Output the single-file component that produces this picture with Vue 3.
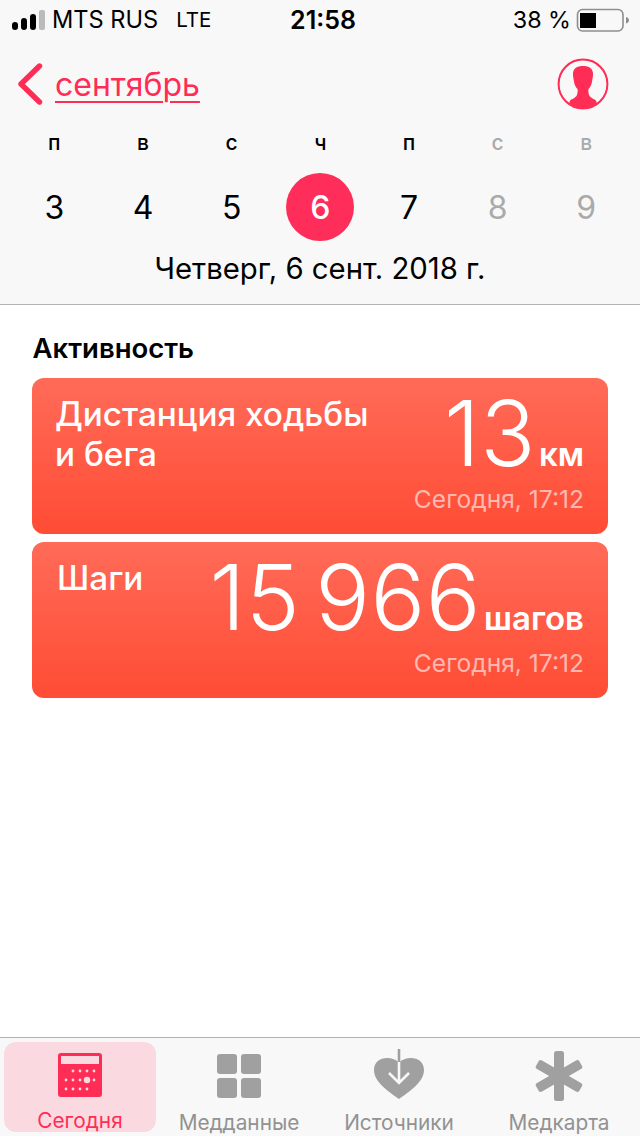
<script setup>
const days = [
  { l: 'п', n: 3 }, { l: 'в', n: 4 }, { l: 'с', n: 5 }, { l: 'ч', n: 6, sel: true },
  { l: 'п', n: 7 }, { l: 'с', n: 8, off: true }, { l: 'в', n: 9, off: true },
]
</script>

<template>
  <div class="page">
    <header class="head">
      <div class="status">
        <div class="st-left">
          <svg class="signal" width="33" height="20" viewBox="0 0 33 20">
            <rect x="0" y="12" width="6" height="8" rx="3" fill="#000" />
            <rect x="9" y="8" width="6" height="12" rx="3" fill="#000" />
            <rect x="18" y="4" width="6" height="16" rx="3" fill="#000" />
            <rect x="27" y="0" width="6" height="20" rx="2" fill="#bbb" />
          </svg>
          <span class="carrier">MTS RUS</span>
          <span class="lte">LTE</span>
        </div>
        <div class="time">21:58</div>
        <div class="st-right">
          <span class="pct">38 %</span>
          <svg width="54" height="24" viewBox="0 0 54 24">
            <rect x="1.5" y="1.5" width="45.5" height="21.5" rx="5" fill="none" stroke="#8e8e8e" stroke-width="1.6" />
            <rect x="4" y="5" width="16" height="15" fill="#000" />
            <path d="M50 9 C52 9.5 53 10.8 53 12.2 C53 13.6 52 15 50 15.5Z" fill="#8e8e8e" />
          </svg>
        </div>
      </div>
      <div class="nav">
        <div class="back">
          <svg width="26" height="42" viewBox="0 0 26 42">
            <path d="M21.5 3 L3 21 L21.5 39" fill="none" stroke="#ff2d55" stroke-width="5.4" stroke-linecap="round" stroke-linejoin="round" />
          </svg>
          <span class="month">сентябрь</span>
        </div>
        <svg class="avatar" width="52" height="52" viewBox="0 0 52 52">
          <defs>
            <clipPath id="ac"><circle cx="26" cy="26" r="24" /></clipPath>
          </defs>
          <circle cx="26" cy="26" r="24.4" fill="none" stroke="#ff2d55" stroke-width="2" />
          <path clip-path="url(#ac)" d="M26 8 C20 8 16.5 10.5 16 15 C15.8 18 16.5 21 17 23.5 C17.4 27 19 29.5 20.5 31 C20.9 33.5 20.6 36 19.5 38 C17.5 40.5 14.5 41 13 42.5 L10 52 L42 52 L39 42.5 C37.5 41 34.5 40.5 32.5 38 C31.4 36 31.1 33.5 31.5 31 C33 29.5 34.6 27 35 23.5 C35.5 21 36.2 18 36 15 C35.5 10.5 32 8 26 8Z" fill="#ff2d55" />
        </svg>
      </div>
      <div class="week">
        <div v-for="(d, i) in days" :key="i" class="day" :class="{ off: d.off }">
          <span class="letter">{{ d.l }}</span>
          <span class="num" :class="{ sel: d.sel }">{{ d.n }}</span>
        </div>
      </div>
      <div class="date">Четверг, 6 сент. 2018 г.</div>
    </header>

    <main class="main">
      <h2 class="title">Активность</h2>
      <section class="card">
        <div class="c-top">
          <div class="c-name">Дистанция ходьбы<br />и бега</div>
          <div class="c-val"><span class="big">13</span><span class="unit">км</span></div>
        </div>
        <div class="c-time">Сегодня, 17:12</div>
      </section>
      <section class="card">
        <div class="c-top">
          <div class="c-name short">Шаги</div>
          <div class="c-val"><span class="big">15 966</span><span class="unit">шагов</span></div>
        </div>
        <div class="c-time">Сегодня, 17:12</div>
      </section>
    </main>

    <nav class="tabs">
      <div class="tab active">
        <div class="ico">
          <svg width="44" height="44" viewBox="0 0 44 44">
            <rect width="44" height="44" rx="3" fill="#ff2d55" />
            <rect x="3" y="3" width="38" height="8" fill="#fadae0" />
            <g fill="#fadae0">
              <circle cx="15" cy="18" r="1.4" /><circle cx="22" cy="18" r="1.4" /><circle cx="29" cy="18" r="1.4" /><circle cx="36" cy="18" r="1.4" />
              <circle cx="8" cy="27" r="1.4" /><circle cx="15" cy="27" r="1.4" /><circle cx="22" cy="27" r="1.4" /><circle cx="29" cy="27" r="3.2" /><circle cx="36" cy="27" r="1.4" />
              <circle cx="8" cy="36" r="1.4" /><circle cx="15" cy="36" r="1.4" /><circle cx="22" cy="36" r="1.4" /><circle cx="29" cy="36" r="1.4" />
            </g>
          </svg>
        </div>
        <span class="t-label">Сегодня</span>
      </div>
      <div class="tab">
        <div class="ico">
          <svg width="44" height="44" viewBox="0 0 44 44" fill="#a0a0a0">
            <rect width="20" height="20" rx="3" /><rect x="24" width="20" height="20" rx="3" />
            <rect y="24" width="20" height="20" rx="3" /><rect x="24" y="24" width="20" height="20" rx="3" />
          </svg>
        </div>
        <span class="t-label">Медданные</span>
      </div>
      <div class="tab">
        <div class="ico">
          <svg width="50" height="54" viewBox="0 0 50 54">
            <path d="M25 50 C14 42 0 33 0 21 C0 13 6 9 13 9 C18 9 22 10.5 25 13.5 C28 10.5 32 9 37 9 C44 9 50 13 50 21 C50 33 36 42 25 50Z" fill="#a0a0a0" />
            <path d="M25 13 V34 M15 24 L25 34 L35 24" fill="none" stroke="#f8f8f8" stroke-width="2.6" />
            <path d="M25 0 V13" stroke="#a0a0a0" stroke-width="2.6" />
          </svg>
        </div>
        <span class="t-label">Источники</span>
      </div>
      <div class="tab">
        <div class="ico">
          <svg width="50" height="50" viewBox="0 0 50 50" fill="#a0a0a0">
            <rect x="20" y="0" width="10" height="50" rx="2.5" />
            <rect x="20" y="0" width="10" height="50" rx="2.5" transform="rotate(60 25 25)" />
            <rect x="20" y="0" width="10" height="50" rx="2.5" transform="rotate(120 25 25)" />
          </svg>
        </div>
        <span class="t-label">Медкарта</span>
      </div>
    </nav>
  </div>
</template>

<style>
html, body { margin: 0; background: #fff; }
</style>

<style scoped>
.page {
  width: 640px;
  height: 1136px;
  display: flex;
  flex-direction: column;
  font-family: Inter, "Noto Sans", sans-serif;
  color: #000;
  background: #fff;
  overflow: hidden;
}
.head {
  height: 305px;
  box-sizing: border-box;
  background: #f8f8f8;
  border-bottom: 1px solid #b2b2b2;
  flex: none;
}
.status {
  height: 40px;
  display: grid;
  grid-template-columns: 1fr auto 1fr;
  align-items: center;
  font-size: 24px;
  line-height: 40px;
}
.st-left { display: flex; align-items: center; padding-left: 12px; }
.signal { margin-right: 7px; }
.carrier { font-size: 23.6px; }
.lte { margin-left: 18px; font-size: 20.5px; }
.time { font-weight: 600; font-size: 25px; margin-left: 6px; }
.st-right { display: flex; justify-content: flex-end; align-items: center; padding-right: 10px; gap: 5px; }
.pct { font-size: 23.3px; }
.nav {
  height: 60px;
  margin-top: 14px;
  padding: 0 31px 0 18px;
  display: flex;
  justify-content: space-between;
  align-items: center;
  box-sizing: border-box;
}
.back { display: flex; align-items: center; gap: 11px; }
.month {
  font-size: 32px;
  color: #ff2d55;
  text-decoration: underline;
  text-decoration-thickness: 2px;
  text-underline-offset: 5px;
}
.week {
  display: grid;
  grid-template-columns: repeat(7, 88.67px);
  padding-left: 10px;
}
.day { display: flex; flex-direction: column; align-items: center; }
.letter { font-size: 21px; font-weight: 500; line-height: 26px; margin-top: 16px; }
.num {
  margin-top: 17px;
  width: 68px;
  height: 68px;
  border-radius: 50%;
  display: flex;
  align-items: center;
  justify-content: center;
  font-size: 32px;
}
.num.sel { background: #ff2d5a; color: #fff; font-weight: 500; }
.off .letter, .off .num { color: #aaa; }
.date { text-align: center; font-size: 29.3px; line-height: 36px; margin-top: 10px; }
.main { flex: 1; padding: 0 32px; }
.title { margin: 26px 0 0 0.5px; font-size: 27.5px; line-height: 34px; font-weight: 600; }
.card {
  height: 156px;
  margin-top: 8px;
  box-sizing: border-box;
  border-radius: 12px;
  background: linear-gradient(#ff6b58, #ff4c35);
  color: #fff;
  padding: 16px 24px 12px 23px;
  display: flex;
  flex-direction: column;
}
.title + .card { margin-top: 13px; }
.c-top { display: flex; justify-content: space-between; height: 91px; }
.c-name { font-size: 33.3px; line-height: 40px; font-weight: 500; }
.c-name.short { margin-left: 2px; }
.c-val { display: flex; align-items: baseline; margin-top: 1px; line-height: 76px; }
.big { font-size: 91px; font-weight: 300; letter-spacing: 0.5px; word-spacing: -11px; }
.unit { font-size: 33px; font-weight: 600; margin-left: 3px; }
.c-time { text-align: right; font-size: 24.6px; line-height: 28px; color: rgba(255, 255, 255, .6); }
.tabs {
  flex: none;
  height: 99px;
  box-sizing: border-box;
  border-top: 1px solid #b2b2b2;
  background: #f8f8f8;
  display: grid;
  grid-template-columns: repeat(4, 160px);
}
.tab {
  display: flex;
  flex-direction: column;
  align-items: center;
  box-sizing: border-box;
  padding: 11px 2px 0 0;
  color: #929292;
  height: 98px;
}
.ico { height: 54px; display: flex; align-items: center; justify-content: center; margin-bottom: 9px; }
.t-label { font-size: 20.8px; line-height: 22px; }
.tab.active {
  margin: 4px 4px 0;
  padding: 7px 0 0;
  height: 90px;
  background: #fadae0;
  border-radius: 12px;
  color: #ff2d55;
}
.tab.active .ico { margin-bottom: 10px; }
</style>
